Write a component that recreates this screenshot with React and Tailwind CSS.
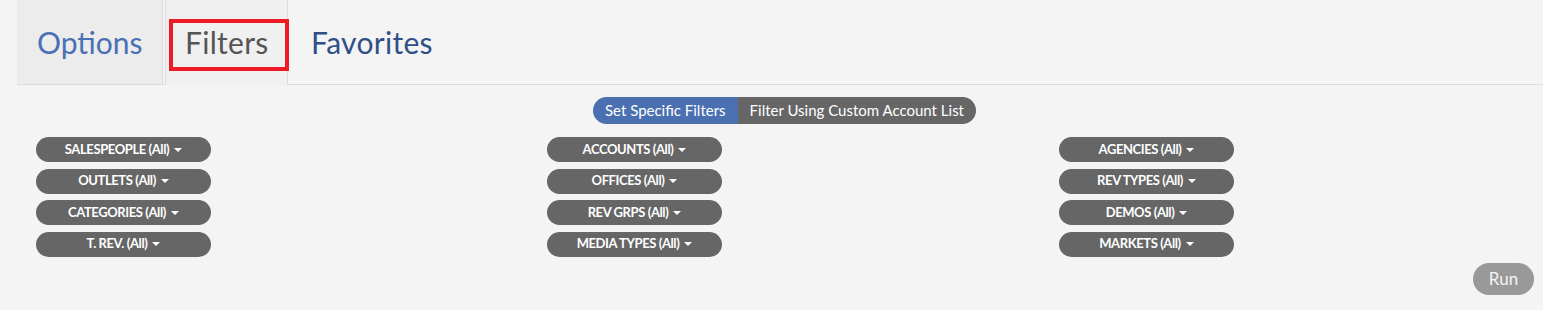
import React from 'react';

const columns = [
    ['SALESPEOPLE', 'OUTLETS', 'CATEGORIES', 'T. REV.'],
    ['ACCOUNTS', 'OFFICES', 'REV GRPS', 'MEDIA TYPES'],
    ['AGENCIES', 'REV TYPES', 'DEMOS', 'MARKETS'],
];

function FilterButton({ label }) {
    return (
        <button className="w-[175px] h-[25px] rounded-full bg-[#666666] text-white text-[13px] font-bold tracking-[-0.4px] flex items-center justify-center">
            <span>{label} (All)</span>
            <span className="ml-[5px] w-0 h-0 border-l-[4.5px] border-r-[4.5px] border-t-[4.5px] border-l-transparent border-r-transparent border-t-white" />
        </button>
    );
}

export default function App() {
    return (
        <div className="w-full h-[310px] bg-[#f4f4f4] relative" style={{ fontFamily: 'Lato, "Open Sans", sans-serif' }}>
            {/* tabs */}
            <div className="flex pl-[17px] h-[85px]">
                <div className="w-[146px] h-full bg-[#ececec] border-r border-b border-[#dddddd] pl-[20px] pt-[22px] text-[30px] text-[#4a70b5] leading-[40px]">
                    Options
                </div>
                <div className="w-[2px] h-full border-b border-[#dddddd]" />
                <div className="w-[123px] h-full bg-[#f0f0f0] border-l border-r border-[#dddddd] pl-[19px] pt-[22px] text-[30px] text-[#555555] leading-[40px] tracking-[0.3px]">
                    Filters
                </div>
                <div className="flex-1 h-full border-b border-[#dddddd] pl-[23px] pt-[22px] text-[30px] text-[#2e4f87] leading-[40px] tracking-[0.3px]">
                    Favorites
                </div>
            </div>

            {/* annotation box */}
            <div className="absolute left-[169px] top-[19px] w-[120px] h-[52px] border-[4px] border-[#ed1c24]" />

            {/* mode toggle */}
            <div className="flex justify-center pl-[26px] mt-[12px]">
                <div className="flex h-[27px] rounded-full overflow-hidden text-[15px] text-white">
                    <div className="bg-[#4a70b1] px-[12px] flex items-center">Set Specific Filters</div>
                    <div className="bg-[#666666] px-[12px] flex items-center">Filter Using Custom Account List</div>
                </div>
            </div>

            {/* filter grid */}
            <div className="grid grid-cols-[511px_512px_1fr] pl-[36px] mt-[13px]">
                {columns.map((col, i) => (
                    <div key={i} className="flex flex-col gap-[6.5px]">
                        {col.map((label) => (
                            <FilterButton key={label} label={label} />
                        ))}
                    </div>
                ))}
            </div>

            <div className="flex justify-end pr-[9px] mt-[6px]">
                <button className="w-[61px] h-[32px] rounded-full bg-[#999999] text-[#f4f4f4] text-[17px]">Run</button>
            </div>
        </div>
    );
}
